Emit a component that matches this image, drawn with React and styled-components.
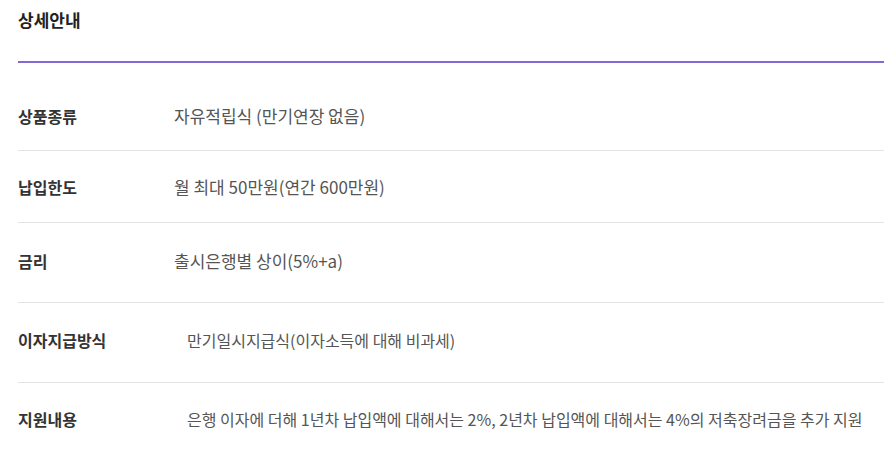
import React from "react";
import styled, { createGlobalStyle } from "styled-components";

const Global = createGlobalStyle`
  html, body { margin: 0; padding: 0; background: #fff; }
  body { font-family: "Noto Sans CJK KR", "Noto Sans", sans-serif; }
`;

const Section = styled.section`
  padding-left: 18px;
  width: 866px;
`;

const Title = styled.h2`
  margin: 0;
  padding: 8px 0 29px;
  font-size: 17px;
  line-height: 24px;
  font-weight: 700;
  color: #222;
  border-bottom: 2px solid #8468d8;
`;

const List = styled.dl`
  margin: 0;
`;

const Row = styled.div`
  display: grid;
  grid-template-columns: ${(p) => p.$labelWidth}px 1fr;
  padding: ${(p) => p.$top}px 0 ${(p) => p.$bottom}px;
  border-bottom: ${(p) => (p.$last ? "none" : "1px solid #e4e4e4")};
  line-height: 22px;
`;

const Label = styled.dt`
  margin: 0;
  font-size: 16px;
  font-weight: 700;
  color: #333;
`;

const Value = styled.dd`
  margin: 0;
  font-size: ${(p) => p.$size}px;
  color: #555;
  white-space: nowrap;
`;

const rows = [
  { label: "상품종류", value: "자유적립식 (만기연장 없음)", top: 42, bottom: 23, w: 156, size: 17 },
  { label: "납입한도", value: "월 최대 50만원(연간 600만원)", top: 25, bottom: 24, w: 156, size: 17 },
  { label: "금리", value: "출시은행별 상이(5%+a)", top: 27, bottom: 30, w: 156, size: 17 },
  { label: "이자지급방식", value: "만기일시지급식(이자소득에 대해 비과세)", top: 26, bottom: 31, w: 169, size: 16 },
  {
    label: "지원내용",
    value:
      "은행 이자에 더해 1년차 납입액에 대해서는 2%, 2년차 납입액에 대해서는 4%의 저축장려금을 추가 지원",
    top: 25,
    bottom: 25,
    w: 169,
    size: 16,
    last: true,
  },
];

export default function App() {
  return (
    <>
      <Global />
      <Section>
        <Title>상세안내</Title>
        <List>
          {rows.map((r) => (
            <Row key={r.label} $top={r.top} $bottom={r.bottom} $labelWidth={r.w} $last={r.last}>
              <Label>{r.label}</Label>
              <Value $size={r.size}>{r.value}</Value>
            </Row>
          ))}
        </List>
      </Section>
    </>
  );
}
